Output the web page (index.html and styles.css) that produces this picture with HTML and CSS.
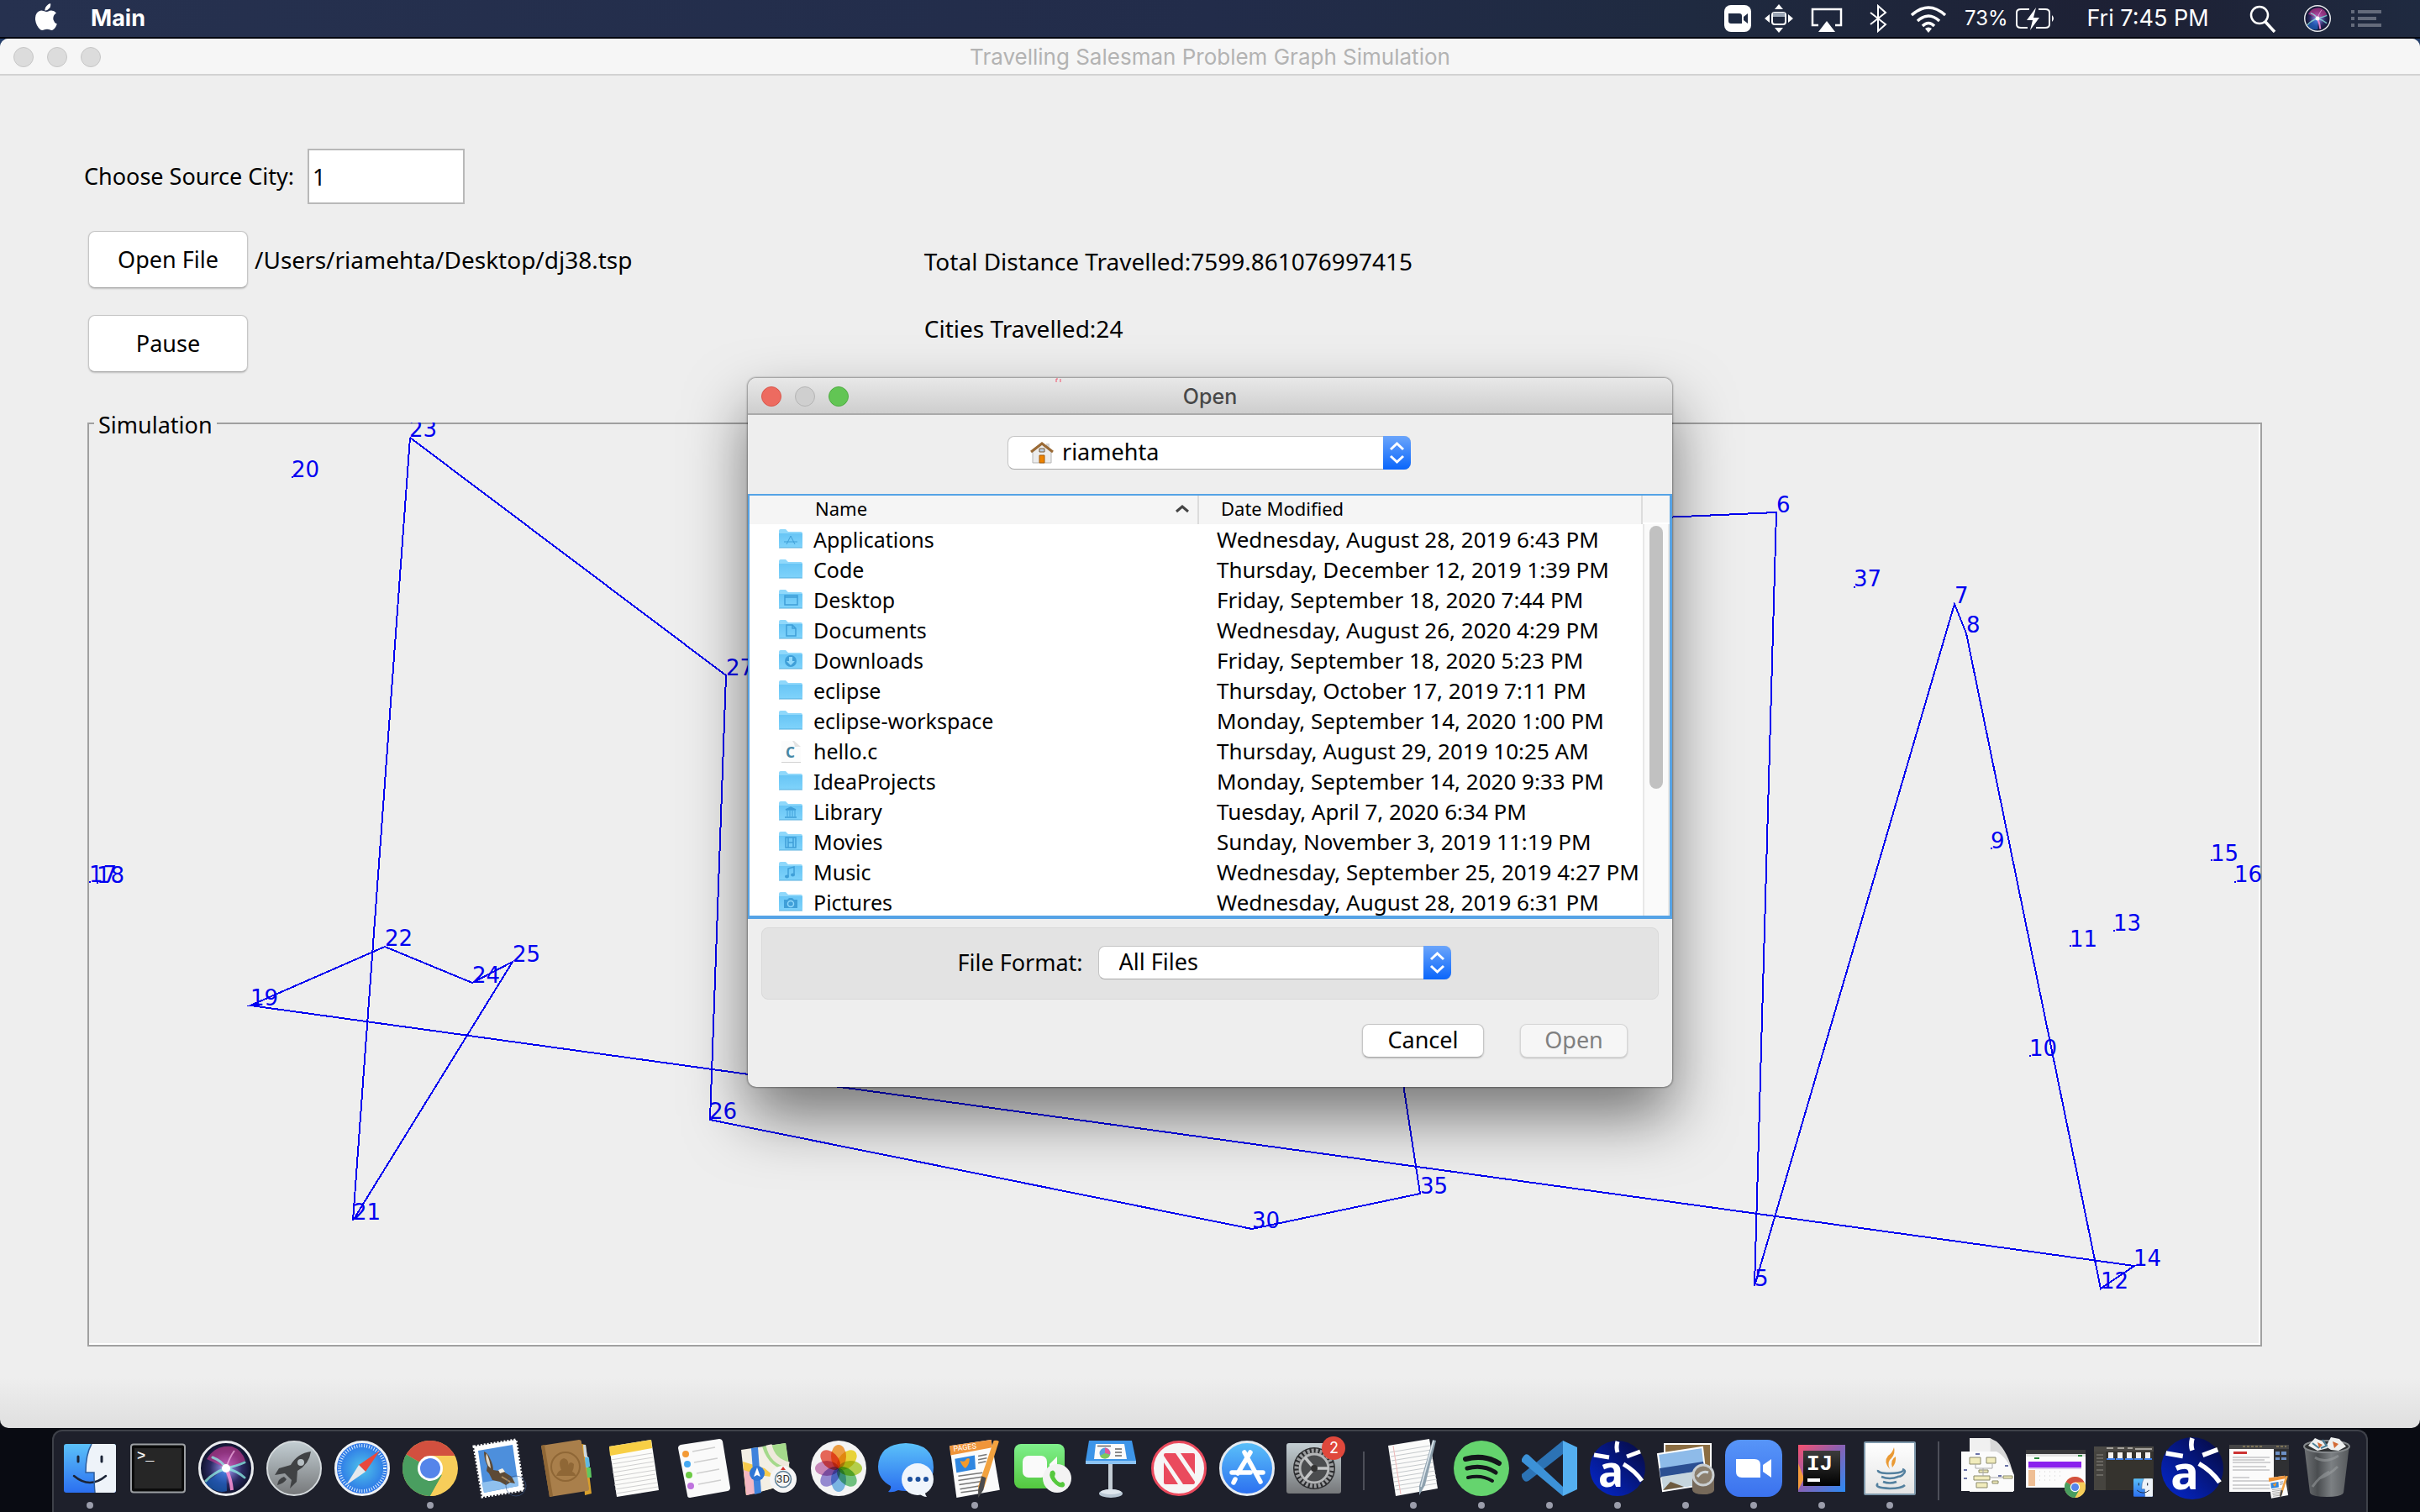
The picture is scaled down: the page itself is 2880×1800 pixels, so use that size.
FILE: index.html
```html
<!DOCTYPE html>
<html lang="en">
<head>
<meta charset="utf-8">
<title>Travelling Salesman Problem Graph Simulation</title>
<link rel="stylesheet" href="styles.css">
</head>
<body>
<svg class="defs" aria-hidden="true">
  <defs>
    <linearGradient id="g-folder" x1="0" y1="0" x2="0" y2="1"><stop offset="0" stop-color="#68c5f5"/><stop offset="1" stop-color="#7fd3fb"/></linearGradient>
    <linearGradient id="g-blue" x1="0" y1="0" x2="0" y2="1"><stop offset="0" stop-color="#5bc1f9"/><stop offset="1" stop-color="#2b6ff0"/></linearGradient>
    <linearGradient id="g-zoom" x1="0" y1="0" x2="0" y2="1"><stop offset="0" stop-color="#5795f8"/><stop offset="1" stop-color="#3b72ee"/></linearGradient>
    <linearGradient id="g-grey" x1="0" y1="0" x2="0" y2="1"><stop offset="0" stop-color="#c3ced3"/><stop offset="1" stop-color="#76787a"/></linearGradient>
    <linearGradient id="g-green" x1="0" y1="0" x2="0" y2="1"><stop offset="0" stop-color="#7ff08c"/><stop offset="1" stop-color="#54c83f"/></linearGradient>
    <linearGradient id="g-paper" x1="0" y1="0" x2="0" y2="1"><stop offset="0" stop-color="#ffffff"/><stop offset="1" stop-color="#e4e4e4"/></linearGradient>
    <radialGradient id="g-safari"><stop offset="0" stop-color="#4fc4ea"/><stop offset="1" stop-color="#2a6fe6"/></radialGradient>
    <radialGradient id="g-siri"><stop offset="0" stop-color="#e8fbff"/><stop offset=".25" stop-color="#7470c0"/><stop offset=".6" stop-color="#2b2a62"/><stop offset="1" stop-color="#0d1128"/></radialGradient>
    <linearGradient id="g-atok" x1="1" y1="0" x2="0" y2="1"><stop offset="0" stop-color="#06093c"/><stop offset="1" stop-color="#0428d2"/></linearGradient>
    <linearGradient id="g-trash" x1="0" y1="0" x2="1" y2="0"><stop offset="0" stop-color="#6f7275"/><stop offset=".3" stop-color="#4a4d50"/><stop offset=".6" stop-color="#7c8083"/><stop offset="1" stop-color="#55585b"/></linearGradient>
    <linearGradient id="g-ij" x1="0" y1="0" x2="1" y2="1"><stop offset="0" stop-color="#f8506d"/><stop offset=".45" stop-color="#8f5fb0"/><stop offset="1" stop-color="#2a8bf5"/></linearGradient>
    <linearGradient id="g-black" x1="0" y1="0" x2="0" y2="1"><stop offset="0" stop-color="#3c3c3c"/><stop offset="1" stop-color="#000"/></linearGradient>
    <symbol id="folder" viewBox="0 0 30 26">
      <path d="M1 2q0-2 2-2h6l3 3h15q2 0 2 2v15q0 1-1 1H2q-1 0-1-1z" fill="#8fd8fb"/>
      <path d="M1 5h28v15q0 2-1 2H2q-1 0-1-2z" fill="url(#g-folder)"/>
      <path d="M1 22h28" stroke="#57aedd" stroke-width="1"/>
    </symbol>
    <symbol id="finder" viewBox="0 0 62 58">
      <rect width="62" height="58" rx="3" fill="url(#g-blue)"/>
      <path d="M33 0h26q3 0 3 3v52q0 3-3 3H37q-1-10-1-24H26Q26 12 33 0z" fill="#eef3f9"/>
      <path d="M17 15v6M45 15v6" stroke="#1b2437" stroke-width="3" stroke-linecap="round"/>
      <path d="M12 38q19 16 38 0" fill="none" stroke="#1b2437" stroke-width="2.5" stroke-linecap="round"/>
      <path d="M33 0Q26 12 26 34h10q0 14 1 24" fill="none" stroke="#2f5e9c" stroke-width="1.5"/>
    </symbol>
    <symbol id="chrome" viewBox="0 0 66 66">
      <circle cx="33" cy="33" r="33" fill="#f7cd5a"/>
      <path d="M33 33L4.400 16.500A33 33 0 0 1 61.600 16.500L61.600 18H33z" fill="#d2503f"/>
      <path d="M4.400 16.500A33 33 0 0 0 33 66l14-25-14-8z" fill="#4a9e60"/>
      <path d="M33 18h28.600A33 33 0 0 1 33 66l14-25z" fill="#f7cd5a"/>
      <circle cx="33" cy="33" r="15" fill="#fff"/><circle cx="33" cy="33" r="12" fill="#5585ea"/>
    </symbol>
    <symbol id="siri" viewBox="0 0 66 66">
      <circle cx="33" cy="33" r="31.500" fill="url(#g-siri)" stroke="#e9ebee" stroke-width="3"/>
      <path d="M10 22Q20 5 40 7q12 4 16 17L34 33z" fill="#d23a92" opacity=".6"/>
      <path d="M33 33L8 50q12 14 26 10z" fill="#1d6fd8" opacity=".6"/>
      <path d="M33 33Q46 36 55 44M33 33Q18 38 9 48M33 33Q46 30 55 26M33 33Q28 24 17 20" fill="none" stroke="#8df0e6" stroke-width="3" opacity=".75" stroke-linecap="round"/>
      <path d="M33 33Q39 46 40 59" fill="none" stroke="#f58ed4" stroke-width="4" opacity=".9"/>
      <path d="M33 33Q37 20 43 12" fill="none" stroke="#f5b6e6" stroke-width="2" opacity=".7"/>
      <circle cx="33" cy="33" r="5" fill="#fff"/>
    </symbol>
    <symbol id="atok" viewBox="0 0 66 66">
      <circle cx="33" cy="33" r="33" fill="url(#g-atok)"/>
      <path d="M33 1q-2 7 0 13M5 17l18 3M44 19l16-6M40 28q14 8 22 20" fill="none" stroke="#fff" stroke-width="5"/>
      <text x="10" y="55" class="atok-letter">a</text>
    </symbol>
    <symbol id="pages" viewBox="0 0 62 68">
      <path d="M2 8L50 1l10 58L10 68z" fill="#fbfbfb"/><path d="M2 8L50 1l1 9L3 19z" fill="#f0953a"/>
      <path d="M8 23l23-4 1 16-22 4z" fill="#2f86e0"/><path d="M14 25q4 2 6 0q2-4 5-2q0 7-5 11q-4-3-6-9z" fill="#f39a2c"/>
      <path d="M35 20l10-2M35 24l10-2M35 28l9-2M12 43l28-4M12 48l27-4M13 53l26-4M14 58l25-4M15 62l22-3" stroke="#777" stroke-width="1.500"/>
      <path d="M53 2q4-1 6 1L42 56l-6 9-1-10z" fill="#f2a23f"/><path d="M39 43l5 2-3 14-6 9v-9z" fill="#4c4c4e"/>
    </symbol>
  </defs>
</svg>

<header class="menubar">
  <svg class="apple" viewBox="0 0 26 32" aria-label="Apple"><path d="M18 0q1 4-2 6.500Q14 9 11.500 8.500 11 5.500 13.500 3 15.500.5 18 0zM13 10q2 0 4-1.200 5-1 8 2.700-4.500 3-3.500 8 .8 3.500 4.300 5-2 6-5.300 7.300-1.600.5-3.500-.5-3-1.300-6 0-3 1.200-5 0Q1 27 0 19.500-.5 10 7 8.500q2.500 0 6 1.500z" fill="#fff"/></svg>
  <strong class="app-name">Main</strong>
  <div class="status">
    <svg width="32" height="32" viewBox="0 0 32 32"><rect width="32" height="32" rx="8" fill="#fff"/><path d="M5 10h13q3 0 3 3v9H8q-3 0-3-3zM23 14l5-4v12l-5-4z" fill="#1f2a42"/></svg>
    <svg width="34" height="34" viewBox="0 0 34 34" fill="#fff"><path d="M17 0l5 6H12zM17 34l5-6H12zM0 17l6-5v10zM34 17l-6-5v10z"/><rect x="9" y="10" width="16" height="14" rx="3" fill="none" stroke="#fff" stroke-width="2"/><path d="M10 10h14v5H10z" fill="#9aa5b5"/></svg>
    <svg width="48" height="34" viewBox="0 0 48 34"><path d="M14 25H7V6h34v19h-7" fill="none" stroke="#fff" stroke-width="2.500"/><path d="M24 20l10 13H14z" fill="#fff"/></svg>
    <svg width="42" height="34" viewBox="0 0 42 34"><path d="M12 10l18 14-9 8V2l9 8-18 14" fill="none" stroke="#fff" stroke-width="2"/></svg>
    <svg width="46" height="34" viewBox="0 0 46 34" fill="none" stroke="#fff" stroke-width="3.500"><path d="M3 13q20-18 40 0M10 20q13-12 26 0M16 26q7-7 14 0"/><path d="M19 29q4-3 8 0l-4 5z" fill="#fff" stroke="none"/></svg>
    <span class="battery">73%<svg width="48" height="30" viewBox="0 0 48 30" fill="none" stroke="#fff" stroke-width="2"><path d="M17 4H7Q2 4 2 8v14q0 4 5 4h8M28 4h8q5 0 5 4v14q0 4-5 4H25"/><path d="M25 2L14 17h7l-3 12 11-15h-7z" fill="#fff" stroke="none"/><path d="M44 11q4 4 0 8z" fill="#fff" stroke="none"/></svg></span>
    <time class="clock">Fri 7:45 PM</time>
    <svg width="54" height="34" viewBox="0 0 54 34" fill="none" stroke="#fff"><circle cx="23" cy="13" r="10" stroke-width="2.500"/><path d="M30 21l11 12" stroke-width="3.500"/></svg>
    <svg width="44" height="32"><use href="#siri" x="6" y="0" width="32" height="32"/></svg>
    <svg width="40" height="24" viewBox="0 0 40 24" fill="#646b7b"><path d="M2 2h4v4H2zM10 2h28v4H10zM2 10h4v4H2zM10 10h22v4H10zM2 18h4v4H2zM10 18h28v4H10z"/></svg>
  </div>
</header>

<main class="window">
  <div class="titlebar">
    <span class="lights"><i></i><i></i><i></i></span>
    <h1>Travelling Salesman Problem Graph Simulation</h1>
  </div>
  <div class="content">
    <div class="controls">
      <div class="row"><label for="city">Choose Source City:</label><input id="city" type="text" value="1"></div>
      <div class="row file"><button type="button">Open File</button><span class="value">/Users/riamehta/Desktop/dj38.tsp</span></div>
      <div class="row file"><button type="button">Pause</button></div>
      <div class="totals value"><span>Total Distance Travelled:7599.861076997415</span><span>Cities Travelled:24</span></div>
    </div>
    <div class="sim">
      <fieldset><legend>Simulation</legend></fieldset>
      <svg class="graph" viewBox="104 502 2588 1100">
        <g fill="none" stroke="#0000f0" stroke-width="2" shape-rendering="crispEdges">
          <path d="M488 520L864 803L845 1332L1490 1462L1690 1420L1650 1160"/>
          <path d="M488 520L420 1452L610 1144L562 1169L458 1126L298 1196L2540 1506L2500 1533L2340 753L2326 718L2088 1530L2114 609L1980 615"/>
        </g>
        <g fill="#0000f0">
          <path d="M347 566h2v2h-2zM106 1048h2v2h-2zM115 1049h2v2h-2zM2206 697h2v2h-2zM2369 1008h2v2h-2zM2415 1255h2v2h-2zM2463 1124h2v2h-2zM2515 1106h2v2h-2zM2631 1022h2v2h-2zM2659 1048h2v2h-2z"/>
          <g class="city">
            <text x="487" y="519">23</text><text x="347" y="567">20</text><text x="864" y="803">27</text>
            <text x="106" y="1049">17</text><text x="115" y="1050">18</text><text x="458" y="1125">22</text>
            <text x="610" y="1144">25</text><text x="562" y="1169">24</text><text x="298" y="1196">19</text>
            <text x="420" y="1451">21</text><text x="844" y="1331">26</text><text x="1490" y="1461">30</text>
            <text x="1690" y="1420">35</text><text x="2114" y="609">6</text><text x="2206" y="697">37</text>
            <text x="2326" y="717">7</text><text x="2340" y="752">8</text><text x="2369" y="1009">9</text>
            <text x="2415" y="1256">10</text><text x="2463" y="1126">11</text><text x="2515" y="1107">13</text>
            <text x="2631" y="1024">15</text><text x="2659" y="1049">16</text><text x="2539" y="1506">14</text>
            <text x="2500" y="1533">12</text><text x="2088" y="1530">5</text>
          </g>
        </g>
      </svg>
    </div>
  </div>
</main>

<section class="dialog" role="dialog" aria-labelledby="dialog-title">
  <div class="titlebar">
    <span class="lights"><i class="close"></i><i></i><i class="zoom"></i></span>
    <h2 id="dialog-title">Open</h2>
  </div>
  <svg class="speck" width="9" height="6" viewBox="0 0 9 6"><path d="M1 5V1h2M6 1v4" fill="none" stroke="#f0506a" stroke-width="1"/></svg>
  <div class="place">
    <span class="combo combo-home">
      <select aria-label="Folder"><option>riamehta</option></select>
      <svg class="home" width="28" height="28" viewBox="0 0 28 28"><path d="M19 3h4v7h-4z" fill="#d5d5d5"/><path d="M3 13L14 4l11 9v13H3z" fill="#ececec" stroke="#b5b5b5"/><path d="M1 13L14 3l13 10" fill="none" stroke="#9a6a35" stroke-width="3"/><path d="M11 9h6v4h-6z" fill="#b9cfe6" stroke="#7b5a35"/><path d="M11 17h6v9h-6z" fill="#ee8300" stroke="#a35d0c"/></svg>
      <svg class="cap" viewBox="0 0 33 40"><path d="M9 16l7.500-7 7.500 7M9 24l7.500 7 7.500-7" fill="none" stroke="#fff" stroke-width="3"/></svg>
    </span>
  </div>
  <div class="files">
    <table>
      <thead><tr><th class="name">Name<svg width="16" height="10" viewBox="0 0 16 10"><path d="M1 8l7-6 7 6" fill="none" stroke="#444" stroke-width="3"/></svg></th><th>Date Modified</th></tr></thead>
      <tbody>
        <tr><td><svg viewBox="0 0 30 26"><use href="#folder"/><path d="M10 18l5-10 5 10M7 15h16" fill="none" stroke="#3f9fd8"/></svg>Applications</td><td>Wednesday, August 28, 2019 6:43 PM</td></tr>
        <tr><td><svg viewBox="0 0 30 26"><use href="#folder"/></svg>Code</td><td>Thursday, December 12, 2019 1:39 PM</td></tr>
        <tr><td><svg viewBox="0 0 30 26"><use href="#folder"/><path d="M8 7h15v11H8zM8 9h15" fill="none" stroke="#3f9fd8" stroke-width="1.500"/></svg>Desktop</td><td>Friday, September 18, 2020 7:44 PM</td></tr>
        <tr><td><svg viewBox="0 0 30 26"><use href="#folder"/><path d="M10 6h7l4 4v9H10zM17 6v4h4" fill="none" stroke="#3f9fd8" stroke-width="1.500"/></svg>Documents</td><td>Wednesday, August 26, 2020 4:29 PM</td></tr>
        <tr><td><svg viewBox="0 0 30 26"><use href="#folder"/><circle cx="15" cy="13" r="7" fill="#3f9fd8"/><path d="M13 8h4v5h3l-5 5-5-5h3z" fill="#8fd8fb"/></svg>Downloads</td><td>Friday, September 18, 2020 5:23 PM</td></tr>
        <tr><td><svg viewBox="0 0 30 26"><use href="#folder"/></svg>eclipse</td><td>Thursday, October 17, 2019 7:11 PM</td></tr>
        <tr><td><svg viewBox="0 0 30 26"><use href="#folder"/></svg>eclipse-workspace</td><td>Monday, September 14, 2020 1:00 PM</td></tr>
        <tr><td><svg viewBox="0 0 30 26"><path d="M4 0h15l8 7v18H4z" fill="#fcfcfc"/><path d="M17 0l2 0 8 7h-7q-1-5-3-7z" fill="#e3e3e3"/><path d="M4 25.500h23" stroke="#d2d2d2"/><text x="9" y="20" class="c-letter">C</text></svg>hello.c</td><td>Thursday, August 29, 2019 10:25 AM</td></tr>
        <tr><td><svg viewBox="0 0 30 26"><use href="#folder"/></svg>IdeaProjects</td><td>Monday, September 14, 2020 9:33 PM</td></tr>
        <tr><td><svg viewBox="0 0 30 26"><use href="#folder"/><path d="M8 19h14M9 10h12l-6-3z" fill="#3f9fd8" stroke="#3f9fd8" stroke-width="1.500"/><path d="M11 11v7M14 11v7M17 11v7M20 11v7" stroke="#3f9fd8" stroke-width="1"/></svg>Library</td><td>Tuesday, April 7, 2020 6:34 PM</td></tr>
        <tr><td><svg viewBox="0 0 30 26"><use href="#folder"/><path d="M9 7h12v12H9zM12 7v12M18 7v12M12 13h6" fill="none" stroke="#3f9fd8" stroke-width="1.500"/></svg>Movies</td><td>Sunday, November 3, 2019 11:19 PM</td></tr>
        <tr><td><svg viewBox="0 0 30 26"><use href="#folder"/><path d="M12 17V8l7-2v9" fill="none" stroke="#3f9fd8" stroke-width="1.500"/><ellipse cx="10.500" cy="17.500" rx="2.500" ry="2" fill="#3f9fd8"/><ellipse cx="17.500" cy="15.500" rx="2.500" ry="2" fill="#3f9fd8"/></svg>Music</td><td>Wednesday, September 25, 2019 4:27 PM</td></tr>
        <tr><td><svg viewBox="0 0 30 26"><use href="#folder"/><path d="M7 9h4l2-2h4l2 2h4v10H7z" fill="#3f9fd8"/><circle cx="15" cy="14" r="3.500" fill="none" stroke="#8fd8fb" stroke-width="1.500"/></svg>Pictures</td><td>Wednesday, August 28, 2019 6:31 PM</td></tr>
      </tbody>
    </table>
    <div class="scroll"><div class="track"><i class="thumb"></i></div></div>
  </div>
  <div class="format">
    <label for="format">File Format:</label>
    <span class="combo">
      <select id="format"><option>All Files</option></select>
      <svg class="cap" viewBox="0 0 33 40"><path d="M9 16l7.500-7 7.500 7M9 24l7.500 7 7.500-7" fill="none" stroke="#fff" stroke-width="3"/></svg>
    </span>
  </div>
  <div class="actions"><button type="button" class="cancel">Cancel</button><button type="button" class="open" disabled>Open</button></div>
</section>

<footer class="dock">
  <ul>
    <li class="on"><svg viewBox="0 0 80 76"><use href="#finder" x="9" y="9" width="62" height="58"/></svg></li>
    <li><svg viewBox="0 0 80 76"><rect x="8" y="9.500" width="64" height="57" rx="3" fill="#0b0b0b" stroke="#9c9fa3" stroke-width="2"/><rect x="12" y="14" width="56" height="48" fill="#262626"/><text x="15" y="28" class="prompt">&gt;_</text></svg></li>
    <li><svg viewBox="0 0 80 76"><use href="#siri" x="7" y="5" width="66" height="66"/></svg></li>
    <li><svg viewBox="0 0 80 76"><circle cx="40" cy="38" r="32" fill="url(#g-grey)" stroke="#d5dadd" stroke-width="2"/><path d="M60 18q-16 2-24 16l-14 4-5 8 12-2 8 8-2 10 8-8 1-13q14-8 16-23z" fill="#404244"/><circle cx="48" cy="31" r="4" fill="#b6bfc3"/><path d="M28 48q-7 2-8 10 8-2 11-7z" fill="#404244"/></svg></li>
    <li><svg viewBox="0 0 80 76"><circle cx="40" cy="38" r="31.500" fill="url(#g-safari)" stroke="#eef1f4" stroke-width="3"/><circle cx="40" cy="38" r="27" fill="none" stroke="#dff2ff" stroke-width="4" stroke-dasharray="1 2"/><path d="M61 17L36 34l8 8z" fill="#e8483c"/><path d="M21 58l15-24 8 8z" fill="#e6e9ec"/></svg></li>
    <li class="on"><svg viewBox="0 0 80 76"><use href="#chrome" x="7" y="5" width="66" height="66"/></svg></li>
    <li><svg viewBox="0 0 80 76"><path d="M11 12l50-8 9 60-49 8z" fill="#fff" stroke="#fff" stroke-width="3" stroke-dasharray="2 2"/><path d="M16 17l41-7 7 49-41 8z" fill="#4d8fdc"/><path d="M20 55l43-7 1 11-41 8z" fill="#8fc0ee"/><path d="M23 18q5 2 7 8 4 8 4 14l6 1 5-2 3 4 8 5 4 8-6-1-5 3-7-4-9-2-4-8-3-3 1-6q-4-8-4-17z" fill="#5d4a35"/><path d="M26 20q4 8 5 18l-3-3q-4-8-2-15z" fill="#e2d9c8"/><path d="M40 40l5-2 3 4-6 2z" fill="#f4efe4"/><path d="M44 48l10 6" stroke="#a98c62" stroke-width="2"/><circle cx="61" cy="59" r="12" fill="none" stroke="#39598a" opacity=".6"/></svg></li>
    <li><svg viewBox="0 0 80 76"><path d="M58 9l5 1 7 58-8 2z" fill="#d9a02c"/><path d="M60 10l3 0 2 14h-4zM62 24l4 0 2 12-4 1z" fill="#cdd8e0"/><path d="M62 25l5 0 1 11-5 1z" fill="#5fb9e4"/><path d="M64 37h5l1 12h-5z" fill="#5fc860"/><path d="M10 11l45-7q3 0 3 3l9 55q0 3-3 3l-44 7z" fill="#a97f4b"/><path d="M10 11l4-1 10 61-4 1z" fill="#8f6736"/><circle cx="39" cy="36" r="17" fill="none" stroke="#8f6736" stroke-width="2"/><path d="M28 47q2-6 6-7-5-12 3-14 8 2 4 13 2-12 8-6 0 5-2 9 4 2 4 5z" fill="#8f6736"/></svg></li>
    <li><svg viewBox="0 0 80 76"><path d="M10 12l50-8 9 60-50 8z" fill="#fcfcfa"/><path d="M10 12l50-8 1 10-50 9z" fill="#f8cf45"/><path d="M12 28l49-8M13 33l49-8M14 38l49-8M14 43l49-8M15 48l50-8M16 53l49-8M16 58l50-8M17 63l50-8M18 68l50-8" stroke="#cfcfcf"/></svg></li>
    <li><svg viewBox="0 0 80 76"><path d="M14 10l46-7q3 0 4 3l9 55q0 3-3 4l-45 8q-3 0-3-3L11 14q0-3 3-4z" fill="#fafafa"/><g stroke="#cfcfcf" stroke-width="1.500"><path d="M28 18l27-5M30 31l28-5M33 44l27-5M35 57l27-5"/></g><circle cx="20" cy="21" r="4" fill="#f39a36"/><circle cx="22" cy="33" r="4" fill="#45a8f2"/><circle cx="24" cy="46" r="4" fill="#6ccb45"/><circle cx="26" cy="59" r="4" fill="#bf73de"/></svg></li>
    <li><svg viewBox="0 0 80 76"><path d="M5 16l53-8 6 48-53 14z" fill="#f3efe4"/><path d="M7 30l26 8 24 20-46 12z" fill="#f6c94a"/><path d="M8 40l12 4 2 24-11 2z" fill="#f4b7c2"/><path d="M26 46l14 2 16 10-28 8z" fill="#f3efe4"/><path d="M30 12l28-4 5 32q-24 0-33-28z" fill="#a4d98b"/><path d="M38 10q4 20 24 24" fill="none" stroke="#eee9dc" stroke-width="7"/><path d="M17 14l8-1 4 54-8 2z" fill="#3f83dc"/><circle cx="24" cy="44" r="9" fill="#2f76d6"/><path d="M24 37l4 11-4-2-4 2z" fill="#fff"/><circle cx="55" cy="51" r="16" fill="#f5f5f5"/><circle cx="55" cy="51" r="9.500" fill="none" stroke="#5b7f96" stroke-width="1.500"/><text x="55" y="55" class="three-d">3D</text><path d="M55 36l3 4h-6z" fill="#d3362c"/></svg></li>
    <li><svg class="photos" viewBox="0 0 80 76"><circle cx="40" cy="38" r="33" fill="#f4f4f4"/><g><ellipse cx="40" cy="24" rx="9" ry="14" fill="#f7a445"/><ellipse cx="40" cy="24" rx="9" ry="14" fill="#f3dc3a" transform="rotate(45 40 38)"/><ellipse cx="40" cy="24" rx="9" ry="14" fill="#bcd84e" transform="rotate(90 40 38)"/><ellipse cx="40" cy="24" rx="9" ry="14" fill="#74c884" transform="rotate(135 40 38)"/><ellipse cx="40" cy="24" rx="9" ry="14" fill="#7fbcec" transform="rotate(180 40 38)"/><ellipse cx="40" cy="24" rx="9" ry="14" fill="#9c90da" transform="rotate(225 40 38)"/><ellipse cx="40" cy="24" rx="9" ry="14" fill="#cf8cc0" transform="rotate(270 40 38)"/><ellipse cx="40" cy="24" rx="9" ry="14" fill="#f06a5c" transform="rotate(315 40 38)"/></g></svg></li>
    <li><svg viewBox="0 0 80 76"><path d="M39 8q33 1 33 29 0 26-33 28-5 0-9-1-6 3-12 2 4-4 3-7Q6 51 6 36 7 9 39 8z" fill="url(#g-blue)"/><circle cx="53" cy="51" r="19" fill="#f0f5fc"/><path d="M55 68q4 4 9 4-3-4-2-8z" fill="#f0f5fc"/><circle cx="44" cy="51" r="3" fill="#1c4f9c"/><circle cx="53.500" cy="51" r="3" fill="#1c4f9c"/><circle cx="63" cy="51" r="3" fill="#1c4f9c"/></svg></li>
    <li class="on"><svg viewBox="0 0 80 76"><use href="#pages" x="8" y="3" width="64" height="70"/><text x="15" y="18" class="pages-word" transform="rotate(-8 15 18)">PAGES</text></svg></li>
    <li><svg viewBox="0 0 80 76"><rect x="6" y="9" width="60" height="53" rx="8" fill="url(#g-green)"/><rect x="16" y="23" width="29" height="26" rx="7" fill="#fafafa"/><path d="M48 33l9-9v20l-9-5z" fill="#fafafa"/><circle cx="57" cy="50" r="17" fill="#f3f3f3"/><path d="M49 42q4-4 6 2l-1 4q3 6 7 7l3-1q4 3 1 6-4 2-10-3-9-8-6-15z" fill="#56c93e"/></svg></li>
    <li><svg viewBox="0 0 80 76"><path d="M37 30h5v38h-5z" fill="#c3ccd4"/><ellipse cx="40" cy="68" rx="14" ry="5" fill="#b9c7d4"/><ellipse cx="40" cy="66" rx="12" ry="3" fill="#dfe7ee"/><path d="M14 5h51l5 24H10z" fill="#3d95e8"/><path d="M10 29h60v4H10z" fill="#8cc3f2"/><path d="M22 9h34l3 18H20z" fill="#fbfbfb"/><circle cx="33" cy="20" r="6.500" fill="#5b9de0"/><path d="M33 20v-6.500a6.500 6.500 0 0 1 6 8z" fill="#e05a9a"/><path d="M33 20l6 2a6.500 6.500 0 0 1-12 1z" fill="#7fc95a"/><path d="M24 11.500h16M45 15h8M45 19h8M45 23h8" stroke="#666" stroke-width="1.500"/></svg></li>
    <li><svg viewBox="0 0 80 76"><circle cx="40" cy="38" r="31.500" fill="#f6f6f6" stroke="#ea4a5d" stroke-width="3"/><path d="M22 22q0-2 2-2h12l23 34q0 3-2 3H45L22 23z" fill="#ea4a5d"/><path d="M22 31l17 26H24q-2 0-2-2zM42 20h15q2 0 2 2v23z" fill="#ea4a5d"/></svg></li>
    <li><svg viewBox="0 0 80 76"><circle cx="40" cy="38" r="31.500" fill="url(#g-blue)" stroke="#e6ebf0" stroke-width="3"/><path d="M37 19l19 35M44 19L29 44M22 43h22M52 43h7M26 51l-2 4" stroke="#fff" stroke-width="5.500" stroke-linecap="round"/></svg></li>
    <li class="badged"><svg viewBox="0 0 80 76"><rect x="6" y="8" width="65" height="60" rx="3" fill="url(#g-grey)"/><circle cx="39" cy="38" r="25" fill="#2b2c2e"/><circle cx="39" cy="38" r="21" fill="none" stroke="#9a9c9e" stroke-width="5" stroke-dasharray="3 2"/><circle cx="39" cy="38" r="17" fill="#4b4d4f" stroke="#b5b7b8" stroke-width="3"/><path d="M39 38L28 25M39 38h17M39 38L28 51" stroke="#c3c5c6" stroke-width="3.500"/><circle cx="39" cy="38" r="4" fill="#333"/></svg><span class="badge">2</span></li>
    <li class="rule short"></li>
    <li class="on"><svg viewBox="0 0 80 76"><path d="M10 11l49-8 10 59-50 9z" fill="#fbfbfa"/><path d="M12 19l48-8M13 24l48-8M14 29l48-8M14 34l49-8M15 39l49-8M16 44l49-8M16 49l50-8M17 54l50-8M18 59l50-8M18 64l50-8" stroke="#c5c9cc"/><path d="M16 11l9 58" stroke="#f2b9b9"/><path d="M63 4l4 1-13 53-7 12v-11z" fill="#8ea1ae"/><path d="M64 5l-15 55" stroke="#dfe8ee" stroke-width="1.500"/></svg></li>
    <li class="on"><svg viewBox="0 0 80 76"><circle cx="40" cy="38" r="33" fill="#65d46e"/><g fill="none" stroke="#13161a" stroke-linecap="round"><path d="M21 27q22-6 40 5" stroke-width="6"/><path d="M23 38q19-5 34 5" stroke-width="5"/><path d="M24 49q16-4 29 4" stroke-width="4"/></g></svg></li>
    <li class="on"><svg viewBox="0 0 80 76"><path d="M7 48q3 8 8 5l41-32V5L7 45z" fill="#2c73b5"/><path d="M7 27q4-8 8-5l41 38v11L7 30z" fill="#3c92d8"/><path d="M56 5l17 8v50l-17 8z" fill="#54aff0"/></svg></li>
    <li class="on"><svg viewBox="0 0 80 76"><use href="#atok" x="7" y="5" width="66" height="66"/></svg></li>
    <li class="on"><svg viewBox="0 0 80 76"><path d="M15 9h55v48H15z" fill="#8b6d42" stroke="#fff" stroke-width="2"/><path d="M7 21l53-8 5 44-52 8z" fill="#8ebbe9" stroke="#fff" stroke-width="2"/><path d="M9 38l52-8 2 10-53 9z" fill="#2b4f92"/><path d="M11 48l52-8 1 16-50 8z" fill="#c6d5dd"/><path d="M13 64l9-10 16 6z" fill="#6d5a3f"/><path d="M48 46h26v18q-1 5-13 5t-13-5z" fill="#76695a"/><circle cx="61" cy="46" r="12" fill="#8b7f6e" stroke="#c9ced1" stroke-width="3"/><path d="M54 48q6-8 13-5" fill="none" stroke="#cfd7db" stroke-width="3"/></svg></li>
    <li class="on"><svg viewBox="0 0 80 76"><rect x="6" y="4" width="68" height="68" rx="18" fill="url(#g-zoom)"/><path d="M19 27h22q7 0 7 7v15H26q-7 0-7-7zM51 34l10-7v22l-10-7z" fill="#fff"/></svg></li>
    <li class="on"><svg viewBox="0 0 80 76"><rect x="12" y="10" width="56" height="56" fill="url(#g-ij)"/><path d="M12 32l7 18-7 14z" fill="#f59a3c"/><rect x="18" y="17" width="44" height="42" fill="url(#g-black)"/><text x="22" y="40" class="ij">IJ</text><path d="M23 50h15v4H23z" fill="#fff"/></svg></li>
    <li class="on"><svg viewBox="0 0 80 76"><rect x="10" y="7" width="60" height="62" rx="1" fill="url(#g-paper)" stroke="#7e98ab" stroke-width="2"/><path d="M45 13q-2 7-7 10-6 7 2 16-4-9 2-13 5-6 3-13zM47 24q-7 4-4 13 5-6 4-13z" fill="#ea9a34"/><g fill="none" stroke="#53809f" stroke-width="2.500"><path d="M26 40q-1 4 14 4 12 0 16-3M55 39q6 2 0 7-2 2-6 2M30 48q10 4 20 0M32 54q8 3 16 0M26 56q-6 5 14 6 14 0 18-4"/></g></svg></li>
    <li class="rule"></li>
    <li><svg viewBox="0 0 80 76"><path d="M18 2h24q7 3 14 28l14 16v20H18z" fill="#f0f0f0"/><path d="M42 2q2 16-1 24 10-2 29 20-6-28-20-40z" fill="#d8d8d8"/><path d="M8 18h42q12 6 21 28v19H8z" fill="#fbfbfb"/><g fill="#f1ecbc" stroke="#8b8a6b"><path d="M18 25h13v8H18zM38 25h11v7H38zM29 40h11v3H29zM23 47h19v5H23zM26 55h13v6H26zM58 47h11v3H58zM45 53h7v3h-7z"/></g><path d="M25 20h5v2h-5zM11 39h4v2h-4zM11 49h4v2h-4zM52 46h4v2h-4zM60 34h4v2h-4z" fill="#6b74a8"/><path d="M25 33v5h20v-5M34 38v9M42 49h16" fill="none" stroke="#aaa"/></svg></li>
    <li><svg viewBox="0 0 80 76"><rect x="4" y="16" width="71" height="45" fill="#fcfcfc"/><path d="M4 16h71v5H4z" fill="#3a3a3c"/><path d="M4 21h71v3H4z" fill="#e4e4e4"/><path d="M7 30h63v7H7z" fill="#8a22ee"/><path d="M7 37h63v2H7z" fill="#d9c6ef"/><path d="M7 40h8v19H7z" fill="#efbf95"/><path d="M66 22h5v2h-5zM14 25h6v2h-6z" fill="#2b8a3e"/><path d="M20 42h30M20 47h26M20 52h20" stroke="#ccc" stroke-dasharray="1 5"/><use href="#chrome" x="50" y="48" width="25" height="25"/></svg></li>
    <li><svg viewBox="0 0 80 76"><rect x="4" y="12" width="71" height="52" fill="#35332e"/><path d="M4 12h71v6H4z" fill="#4a4844"/><path d="M4 18h14v46H4z" fill="#46443f"/><path d="M19 14h8M32 14h8M44 14h6M53 15h20" stroke="#a5a29c" stroke-width="2"/><path d="M7 22h8M7 26h8M7 30h8M7 34h8M7 40h8M7 46h8" stroke="#8c8984"/><g fill="#f6f2ef"><path d="M21 19h6v7h-6zM32 19h6v7h-6zM43 19h6v7h-6zM54 19h6v7h-6zM65 19h6v7h-6z"/></g><path d="M19 27h10M30 27h9M41 27h10M52 27h10M64 27h9" stroke="#3f7fe8" stroke-width="2"/><use href="#finder" x="51" y="50" width="23" height="22"/></svg></li>
    <li><svg viewBox="0 0 80 76"><use href="#atok" x="3" y="1" width="74" height="74"/></svg></li>
    <li><svg viewBox="0 0 80 76"><rect x="4" y="10" width="71" height="56" fill="#fbfbfb"/><path d="M4 10h71v5H4z" fill="#454546"/><path d="M57 15h18v51H57z" fill="#2f3033"/><path d="M20 12h24M60 12h12" stroke="#b5a26b" stroke-dasharray="3 2"/><path d="M9 18h16v3H9z" fill="#c33"/><path d="M8 25h44M8 28h38M8 31h45M8 36h40M8 40h44M8 49h20M8 53h45M8 58h45M8 62h45" stroke="#a9a9ac"/><path d="M59 18h5v4h-5zM66 18h6v4h-6zM59 25h5v3h-5zM66 25h6v3h-6z" fill="#6c8fc4"/><use href="#pages" x="50" y="46" width="25" height="28"/></svg></li>
    <li><svg viewBox="0 0 80 76"><path d="M12 10h54l-7 57q-2 5-20 5t-20-5z" fill="url(#g-trash)"/><path d="M22 60q8-12 20-18M25 25q12 8 28-2M30 50q12-4 22-14" fill="none" stroke="#9fa3a6" stroke-width="3" opacity=".5"/><ellipse cx="39" cy="12" rx="27" ry="7" fill="#2f3133" stroke="#85898c" stroke-width="2"/><path d="M17 11l8-9 9 4 6 8-12 3zM38 12l6-11 10 2 8 9-9 5-9-1z" fill="#eef0f0"/><path d="M28 7l6 3-4 4zM46 6l7 3-5 5z" fill="#d26a35"/><path d="M34 4l5 7-7 3M22 8l8 6" fill="none" stroke="#4c7f96" stroke-width="2"/></svg></li>
  </ul>
</footer>
</body>
</html>
```
FILE: styles.css
```css
* { box-sizing: border-box; }

body {
  margin: 0;
  min-height: 100vh;
  display: flex;
  flex-direction: column;
  position: relative;
  overflow: hidden;
  background: linear-gradient(#27426f, #0a0c13 60%);
  font: 27px/36px "Noto Sans", sans-serif;
  color: #000;
}

.defs { position: absolute; width: 0; height: 0; }
button, input, select { font: inherit; color: inherit; margin: 0; }
h1, h2, ul, fieldset { margin: 0; padding: 0; }

/* Menu bar */
.menubar {
  display: flex;
  align-items: center;
  height: 46px;
  padding: 0 44px 0 42px;
  border-bottom: 2px solid #04060f;
  background: linear-gradient(90deg, #26314f, #222c4a 50%, #1f2a40 70%, #1d2034 88%, #1f2a40);
  color: #fff;
  font-family: Inter, sans-serif;
}
.apple { width: 26px; height: 32px; margin-bottom: 4px; }
.app-name { margin-left: 40px; font-weight: 700; }
.status { display: flex; align-items: center; gap: 16px; margin-left: auto; }
.status svg { flex: none; }
.battery { display: flex; align-items: center; justify-content: space-between; width: 112px; padding-left: 4px; font-size: 24px; }
.clock { width: 188px; text-align: center; font-size: 27px; }

/* Windows */
.window {
  flex: 1;
  display: flex;
  flex-direction: column;
  border-radius: 10px;
  background: linear-gradient(#eee calc(100% - 60px), #dfdfdf);
  overflow: hidden;
}
.titlebar {
  display: flex;
  align-items: center;
  justify-content: center;
  position: relative;
  height: 44px;
  padding-top: 2px;
  font-family: Inter, sans-serif;
}
.titlebar h1, .titlebar h2 { font-size: 25px; line-height: 32px; font-weight: 400; }
.window > .titlebar { background: #f6f6f6; border-bottom: 2px solid #d2d2d2; color: #b3b3b3; }
.window > .titlebar h1 { font-size: 26px; }
.lights { display: flex; gap: 16px; position: absolute; left: 16px; top: 10px; }
.lights i { width: 24px; height: 24px; border: 1px solid #c6c6c6; border-radius: 50%; background: #dcdcdc; }
.dialog .lights i { border-color: #b4b4b4; background: #cfcfcf; }
.dialog .lights .close { background: #ed6b60; border-color: #d9584d; }
.dialog .lights .zoom { background: #62c554; border-color: #51ad44; }

.content { flex: 1; display: flex; flex-direction: column; padding: 87px 188px 97px 100px; }
.controls { display: grid; grid-template-columns: 27fr 43fr; row-gap: 32px; }
.row { display: flex; align-items: center; gap: 16px; grid-column: 1; }
.row input { width: 187px; height: 66px; padding: 0 4px; border: 2px solid #b8b8b8; background: #fff; }
.row.file { gap: 8px; padding-left: 5px; }
.value { font-size: 28px; }
button {
  border: 1px solid #c6c6c6;
  border-bottom-color: #a9a9a9;
  border-radius: 8px;
  background: #fff;
  box-shadow: 0 1px 2px rgba(0, 0, 0, .2);
  padding: 0;
}
.row button { width: 190px; height: 68px; }
.totals { grid-column: 2; grid-row: 2 / 4; display: flex; flex-direction: column; gap: 44px; padding-top: 18px; }

.sim { flex: 1; display: flex; position: relative; margin: 60px 0 0 4px; }
fieldset { flex: 1; margin-top: -19px; border: 2px solid #a0a0a0; box-shadow: inset -2px -2px #fff; }
legend { margin-left: 6px; padding: 4px 5px 0; }
.graph { position: absolute; inset: 0; width: 100%; height: 100%; }
.city { font: 26px "DejaVu Sans", sans-serif; }

/* File dialog */
.dialog {
  position: absolute;
  top: 450px;
  left: 50%;
  width: 1100px;
  transform: translateX(-50%);
  border-radius: 10px;
  background: #eee;
  box-shadow: 0 0 2px 1px rgba(0, 0, 0, .35), 0 36px 72px rgba(0, 0, 0, .5);
}
.dialog .titlebar { border-bottom: 2px solid #aaa; border-radius: 10px 10px 0 0; background: linear-gradient(#e8e8e8, #cecece); color: #484848; }
.dialog .titlebar h2 { font-weight: 500; }
.speck { position: absolute; top: 0; left: 366px; }
.place { display: flex; justify-content: center; padding: 25px 2px 29px 0; }
.combo { position: relative; display: block; width: 420px; height: 40px; }
.combo-home { width: 480px; }
.combo select {
  appearance: none;
  display: block;
  width: 100%;
  height: 40px;
  padding: 0 40px 2px 24px;
  border: 1px solid #c4c4c4;
  border-bottom-color: #a9a9a9;
  border-radius: 8px;
  background: #fff;
}
.combo-home select { padding-left: 64px; }
.home { position: absolute; left: 27px; top: 6px; }
.cap { position: absolute; right: 0; top: 0; width: 33px; height: 40px; border-radius: 0 8px 8px 0; background: linear-gradient(#6ba5fb, #0a66fb); pointer-events: none; }

.files {
  display: grid;
  grid-template-columns: 1fr 32px;
  height: 506px;
  border: solid #55a3e6;
  border-width: 2px 3px 4px 2px;
  background: #fff;
  overflow: hidden;
}
table { width: 100%; border-collapse: collapse; table-layout: fixed; align-self: start; }
th { height: 34px; padding: 0 0 4px 26px; background: #f5f5f5; font-size: 22px; line-height: 30px; font-weight: 400; text-align: left; border-right: 2px solid #dcdcdc; }
th.name { width: 534px; padding-left: 78px; }
th svg { float: right; margin: 11px 10px 0 0; }
td { height: 36px; padding: 0 0 0 22px; font-size: 26px; line-height: 36px; white-space: nowrap; }
td:first-child { padding-left: 34px; font-size: 25px; }
td svg { width: 30px; height: 26px; margin-right: 12px; vertical-align: -4px; }
.c-letter { font: 700 17px "Noto Sans", sans-serif; fill: #4686a3; }
.scroll { display: flex; flex-direction: column; padding-top: 34px; background: linear-gradient(#f5f5f5 32px, #fff 32px); }
.track { flex: 1; padding: 2px 4px 0 6px; border: solid #e8e8e8; border-width: 0 2px; background: #fafafa; }
.thumb { display: block; width: 16px; height: 313px; border-radius: 8px; background: #c1c1c1; }

.format { display: flex; align-items: center; justify-content: center; gap: 18px; height: 86px; margin: 10px 16px 0; padding: 0 14px 2px 0; border: 1px solid #d9d9d9; border-radius: 8px; background: #e3e3e3; }
.actions { display: flex; justify-content: flex-end; gap: 43px; padding: 29px 53px 35px 0; }
.actions button { height: 40px; line-height: 34px; padding-bottom: 2px; }
.cancel { width: 145px; }
.open { width: 128px; color: #808080; background: #f6f6f6; border-color: #d6d6d6; }

/* Dock */
.dock { height: 100px; padding: 2px 62px 0; background: #090b12; }
.dock ul { display: flex; height: 98px; padding: 6px 5px 0 3px; list-style: none; border: solid #3e4149; border-width: 2px 2px 0; border-radius: 12px 12px 0 0; background: #1e202b; }
.dock li { flex: 81 1 0; display: flex; flex-direction: column; align-items: center; position: relative; }
.dock li svg { width: 80px; height: 76px; }
.dock .on::after { content: ""; width: 8px; height: 8px; margin-top: 2px; border-radius: 50%; background: #9b9dab; }
.dock .rule { flex: 36 1 0; }
.dock .rule::after { content: ""; width: 2px; height: 70px; margin-top: 6px; background: #4d4f59; }
.dock .rule.short::after { height: 46px; margin-top: 18px; }
.badge { position: absolute; top: 0; right: 4px; width: 28px; height: 28px; border-radius: 50%; background: #e0483c; color: #fff; font: 18px/28px Inter, sans-serif; text-align: center; }
.photos { isolation: isolate; }
.photos ellipse { mix-blend-mode: multiply; }

.prompt { font: 700 17px "Liberation Mono", monospace; fill: #f2f2f2; }
.atok-letter { font: 700 50px "Noto Sans", sans-serif; fill: #fff; }
.three-d { font: 13px Roboto, sans-serif; fill: #333; text-anchor: middle; }
.pages-word { font: 9px Roboto, sans-serif; fill: #fff; }
.ij { font: 700 26px "Liberation Mono", monospace; fill: #fff; }
```
